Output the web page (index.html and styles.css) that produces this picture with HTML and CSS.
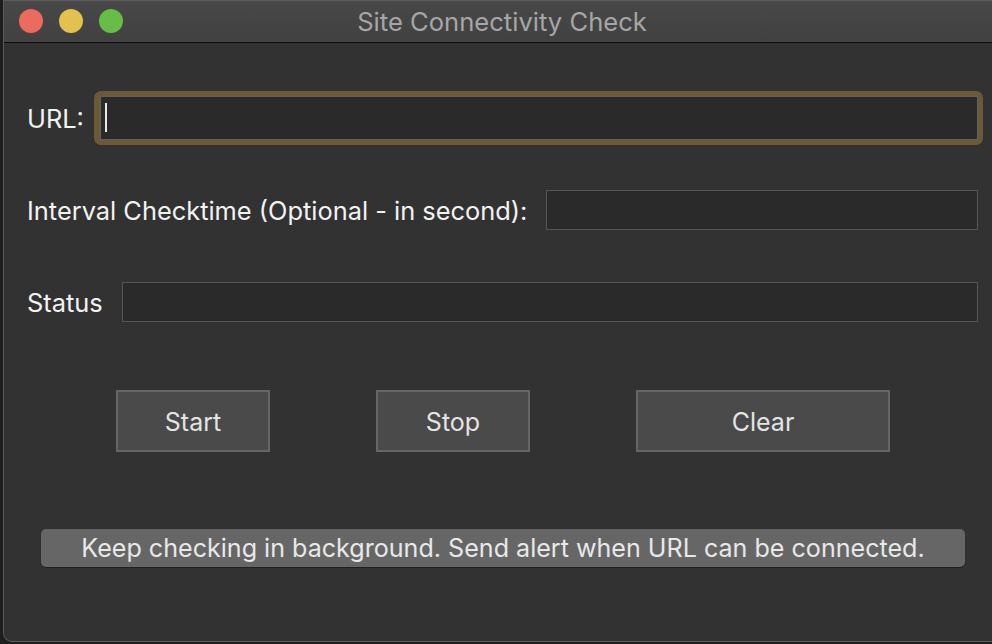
FILE: index.html
```
<!DOCTYPE html>
<html>
<head>
<meta charset="utf-8">
<link rel="stylesheet" href="styles.css">
</head>
<body>
<div class="window">
  <div class="titlebar">
    <div class="lights">
      <span class="light red"></span>
      <span class="light yellow"></span>
      <span class="light green"></span>
    </div>
    <div class="title">Site Connectivity Check</div>
  </div>
  <div class="content">
    <div class="row row-url">
      <label class="label">URL:</label>
      <div class="ring"><div class="field focused"><span class="caret"></span></div></div>
    </div>
    <div class="row row-interval">
      <label class="label">Interval Checktime (Optional - in second):</label>
      <div class="field"></div>
    </div>
    <div class="row row-status">
      <label class="label">Status</label>
      <div class="field"></div>
    </div>
    <div class="buttons">
      <button class="btn">Start</button>
      <button class="btn">Stop</button>
      <button class="btn btn-wide">Clear</button>
    </div>
    <div class="bar">Keep checking in background. Send alert when URL can be connected.</div>
  </div>
</div>
</body>
</html>
```
FILE: styles.css
```
html, body {
  margin: 0;
  padding: 0;
  background: #1e1e1e;
  width: 992px;
  height: 644px;
  overflow: hidden;
}
.window {
  margin-left: 3px;
  width: 989px;
  height: 642px;
  background: #323232;
  border-left: 1px solid #5a5a5a;
  border-bottom: 1px solid #5e5e5e;
  border-bottom-left-radius: 9px;
  box-sizing: border-box;
  font-family: "Inter", "Liberation Sans", sans-serif;
  overflow: hidden;
}
.titlebar {
  position: relative;
  height: 41px;
  border-top: 1px solid #5c5c5c;
  border-bottom: 1px solid #0c0c0c;
  background: linear-gradient(#484848, #414141);
  display: flex;
  align-items: center;
  justify-content: center;
}
.lights {
  position: absolute;
  left: 15px;
  top: 8px;
  display: flex;
  gap: 16px;
}
.light {
  width: 24px;
  height: 24px;
  border-radius: 50%;
  display: block;
}
.red { background: #ec6a5e; }
.yellow { background: #e2c14f; }
.green { background: #67be46; }
.title {
  color: #a6a6a6;
  font-size: 25.6px;
  margin-left: 8px;
  margin-top: -1px;
}
.content {
  padding: 48px 14px 0 23px;
}
.row {
  display: flex;
  align-items: center;
  height: 40px;
}
.label {
  color: #f2f2f2;
  font-size: 25.4px;
  white-space: nowrap;
}
.row-url {
  height: 54px;
}
.row-url .label { margin-right: 10px; }
.ring {
  flex: 1;
  margin-right: -5px;
  padding: 5px 5px 5px 6px;
  background: #6c5937;
  border-radius: 7px;
}
.field {
  flex: 1;
  height: 40px;
  box-sizing: border-box;
  background: #2a2a2a;
  border: 1px solid #555;
}
.field.focused {
  height: 44px;
  border-color: #626262;
  padding: 6px 0 0 4px;
}
.caret {
  display: block;
  width: 2px;
  height: 29px;
  background: #e8e8e8;
}
.row-interval {
  margin-top: 45px;
}
.row-interval .label { margin-right: 19px; }
.row-status {
  margin-top: 52px;
}
.row-status .label { margin-right: 19px; }
.buttons {
  margin-top: 68px;
  margin-left: 89px;
  display: flex;
  gap: 106px;
}
.btn {
  width: 154px;
  height: 62px;
  background: #4a4a4a;
  border: 2px solid #666;
  color: #e4e4e4;
  font-family: "Inter", "Liberation Sans", sans-serif;
  font-size: 25px;
  padding: 2px 0 0;
}
.btn-wide { width: 254px; }
.bar {
  margin-top: 77px;
  margin-left: 14px;
  width: 924px;
  height: 38px;
  border-radius: 5px;
  background: #666;
  color: #e8e8e8;
  font-size: 25.1px;
  display: flex;
  align-items: center;
  justify-content: center;
  box-shadow: 0 1px 1px rgba(0,0,0,0.4);
}
```
